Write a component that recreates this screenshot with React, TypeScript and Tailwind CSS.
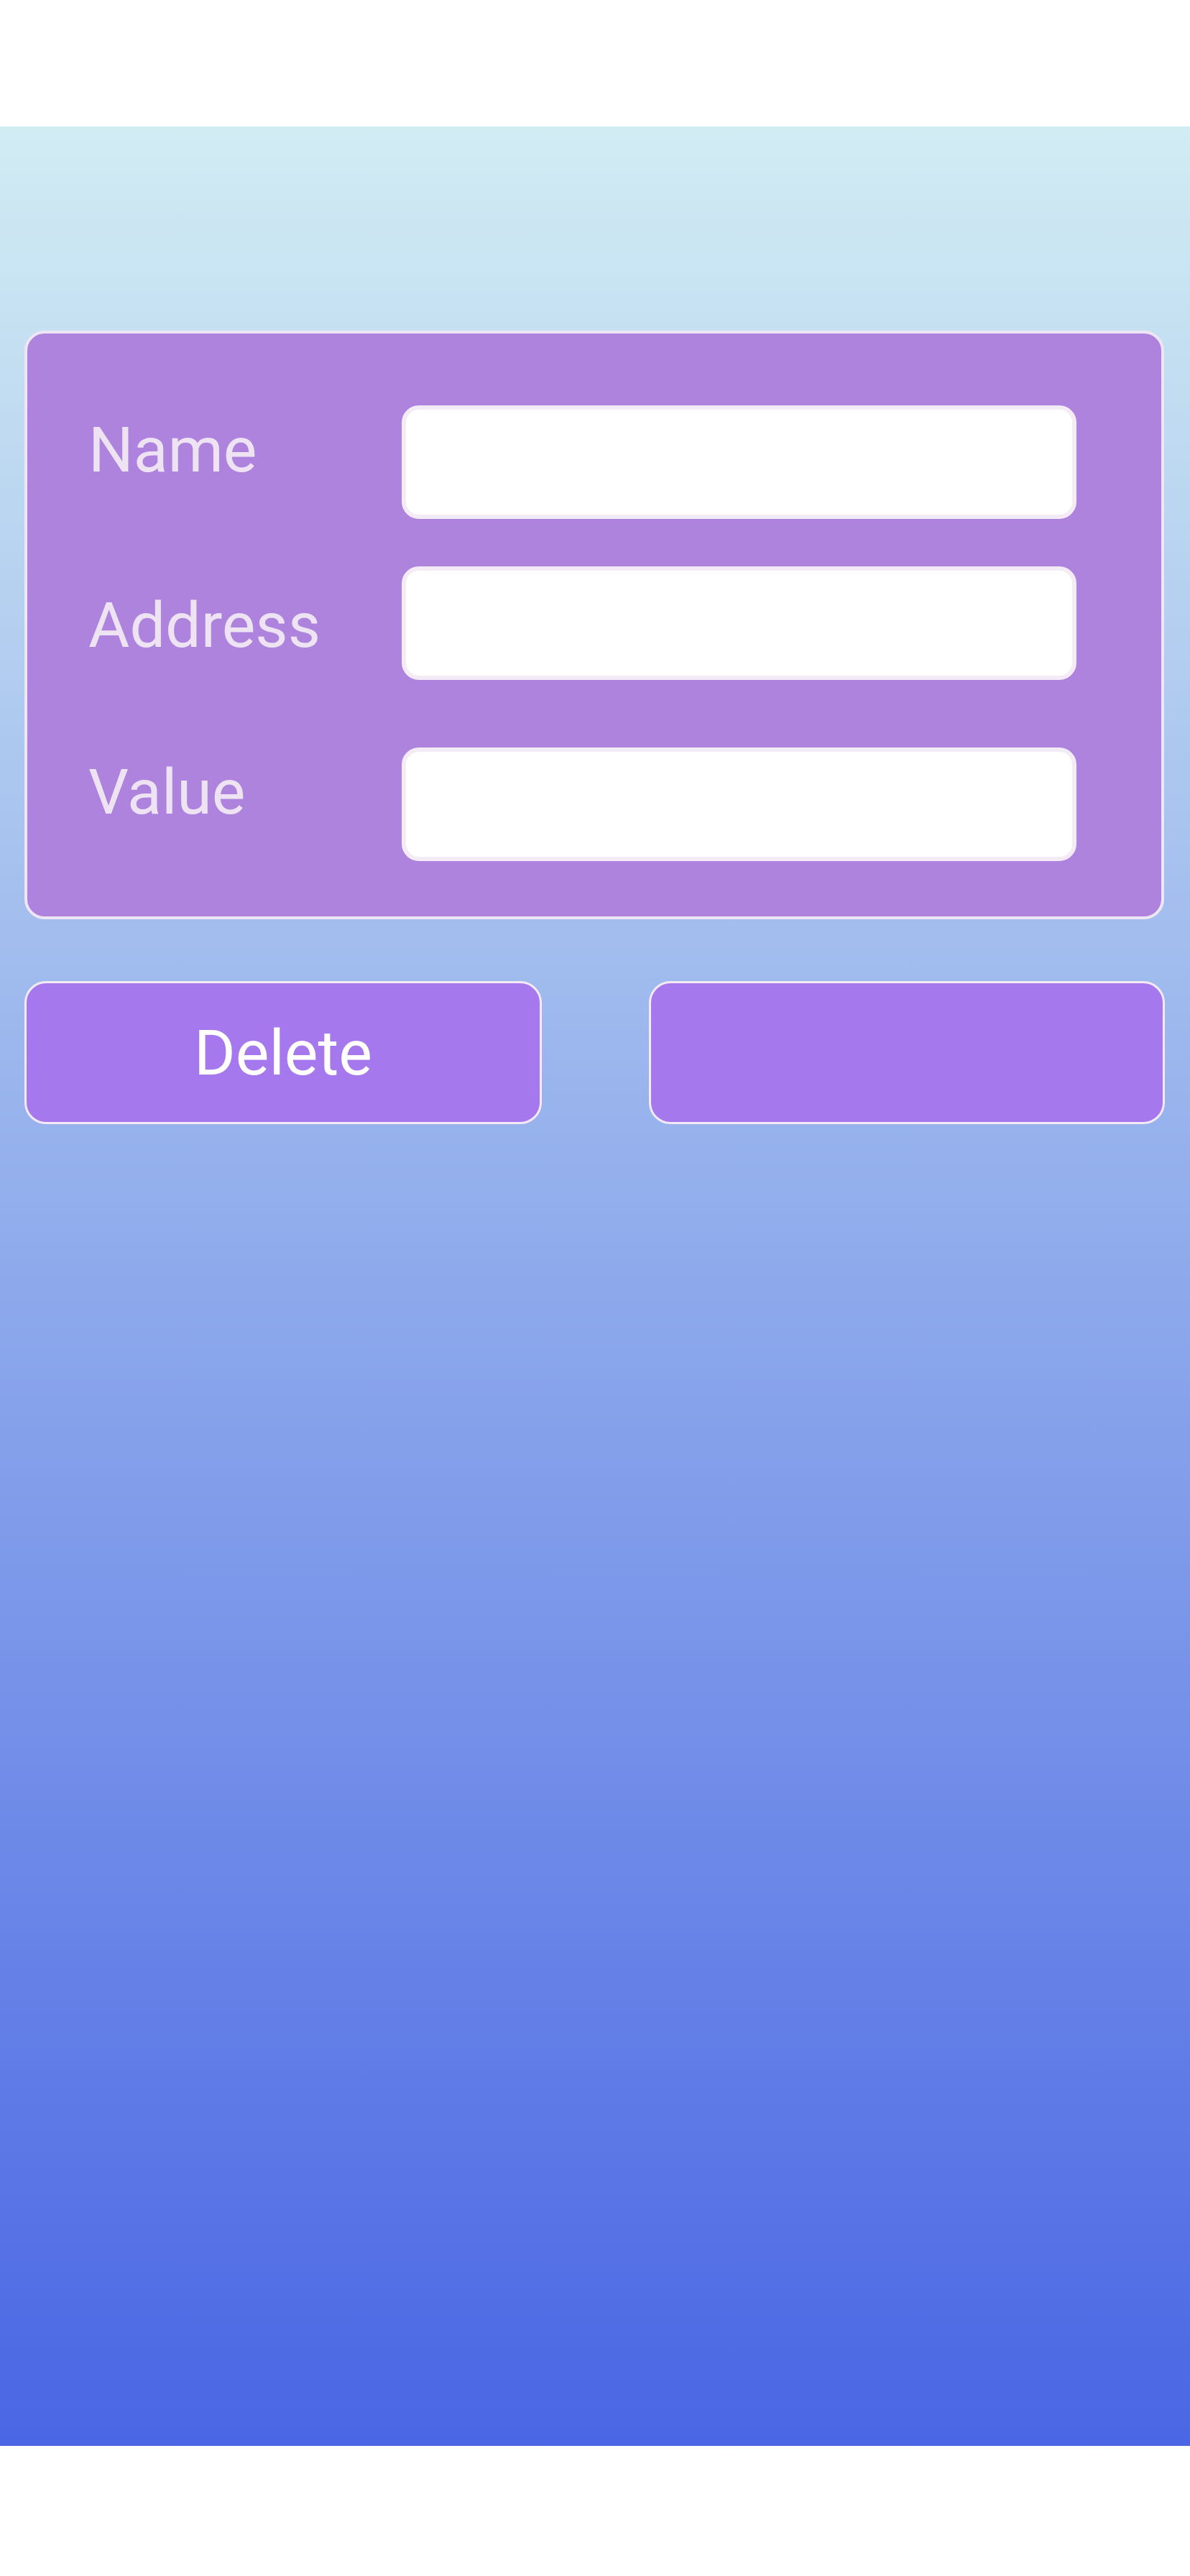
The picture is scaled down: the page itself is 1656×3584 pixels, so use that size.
import React from "react";

const font = { fontFamily: "Roboto, 'Noto Sans', sans-serif" };

function Row({ label, labelTop, mt }: { label: string; labelTop: string; mt: string }) {
  return (
    <div className={`flex items-start ${mt}`}>
      <div className={`w-[436px] text-[88px] leading-none text-[#EEE3F3] ${labelTop}`}>{label}</div>
      <input
        className="w-[939px] h-[158px] bg-white border-[6px] border-[#F3EBF6] rounded-[24px] outline-none"
        type="text"
      />
    </div>
  );
}

export default function App() {
  return (
    <div className="w-[1656px] h-[3584px] bg-white flex flex-col" style={font}>
      <div className="h-[176px] shrink-0" />
      <div className="h-[3227px] shrink-0 bg-[linear-gradient(to_bottom,#D1ECF3,#4A66E4)] pt-[284px] pl-[34px] pr-[36px]">
        <div className="w-[1586px] bg-[#AE83DE] border-4 border-[#EEE6F5] rounded-[28px] pl-[85px] pt-[100px] pb-[77px] flex flex-col">
          <Row label="Name" labelTop="mt-[18px]" mt="" />
          <Row label="Address" labelTop="mt-[38px]" mt="mt-[66px]" />
          <Row label="Value" labelTop="mt-[18px]" mt="mt-[94px]" />
        </div>
        <div className="mt-[86px] flex justify-between w-[1587px]">
          <button className="w-[720px] h-[199px] bg-[#A678ED] border-[3px] border-[#F3EAF6] rounded-[30px] text-white text-[88px] leading-none flex items-center justify-center">
            Delete
          </button>
          <button className="w-[718px] h-[199px] bg-[#A678ED] border-[3px] border-[#F3EAF6] rounded-[30px]" />
        </div>
      </div>
      <div className="flex-1" />
    </div>
  );
}
